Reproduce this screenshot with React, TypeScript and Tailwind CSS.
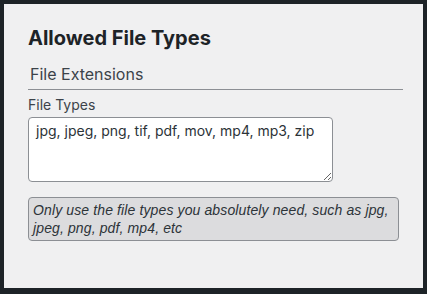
import React from "react";

export default function App() {
  return (
    <div className="w-[427px] h-[294px] bg-[#1d2327] p-[4px] pb-[6px] pr-[4px]" style={{ fontFamily: "Inter, 'Liberation Sans', sans-serif" }}>
      <div className="h-full bg-[#f0f0f1] pl-[24px] pr-[20px] pt-[22px] text-[#1d2327]">
        <h1 className="text-[20px] font-bold leading-[24px]">Allowed File Types</h1>
        <div className="mt-[13px] border-b border-[#8c8f94] pb-[4px] pl-[2px] text-[16px] leading-[22px] text-[#3c434a]">File Extensions</div>
        <label className="mt-[6px] block text-[14px] leading-[18px] text-[#3c434a]">File Types</label>
        <textarea
          className="mt-[3px] block h-[65px] w-[305px] resize-y rounded-[4px] border border-[#8c8f94] bg-white px-[7px] py-[3px] text-[14px] leading-[20px] text-[#2c3338] outline-none"
          defaultValue="jpg, jpeg, png, tif, pdf, mov, mp4, mp3, zip"
        />
        <div
          className="mt-[15px] w-[371px] rounded-[4px] border border-[#8c8f94] bg-[#dcdcde] pl-[4px] pr-[2px] py-[3px] text-[14px] italic leading-[18px] tracking-[0.12px] text-[#2c3338]"
          style={{ fontFamily: "'Liberation Sans', sans-serif" }}
        >
          Only use the file types you absolutely need, such as jpg, jpeg, png, pdf, mp4, etc
        </div>
      </div>
    </div>
  );
}
